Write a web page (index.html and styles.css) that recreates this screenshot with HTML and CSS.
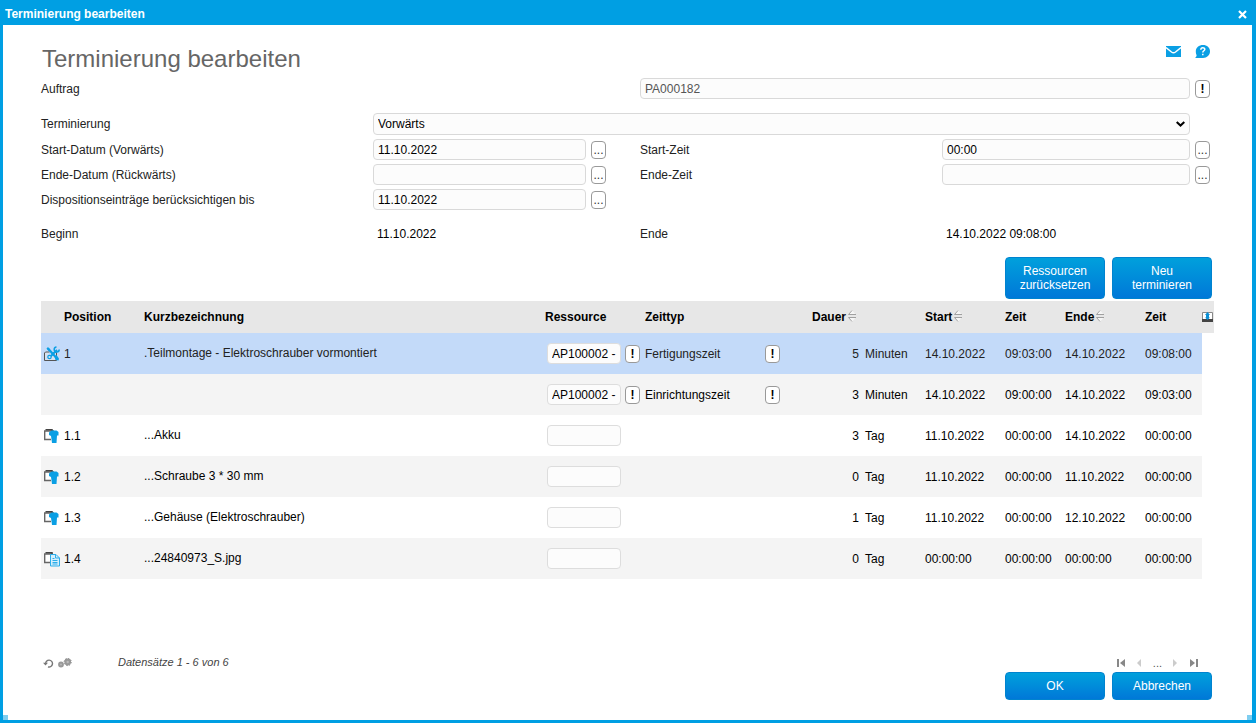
FILE: index.html
```html
<!DOCTYPE html>
<html lang="de">
<head>
<meta charset="utf-8">
<title>Terminierung bearbeiten</title>
<link rel="stylesheet" href="styles.css">
</head>
<body>
<svg class="defs" aria-hidden="true">
  <symbol id="sort" viewBox="0 0 8 12">
    <path d="M4 0 0 5h8zM0 7h8L4 12z" fill="#f6f6f6"/>
    <path d="M4 .5 .5 4.500H8M8 7.500H.5L4 11.500" fill="none" stroke="#a0a0a0"/>
  </symbol>
  <symbol id="part" viewBox="0 0 16 16">
    <path d="M0 3h2V2h6v1h3v9H0z" fill="#fff"/>
    <path d="M7 11.500H.7V3H10" fill="none" stroke="#666" stroke-width="1.400"/><path d="M1.500 1.700H8V3" fill="none" stroke="#444" stroke-width="1.500"/>
    <path d="M5 4.500 7.500 2.500h5L14.500 4v3.500H13L12.500 15H8L7 8 5 7z" fill="#0a9fe4"/>
  </symbol>
  <symbol id="doc" viewBox="0 0 16 16">
    <path d="M0 3h11v9H0z" fill="#fff"/>
    <path d="M6 11.500H.7V3H9" fill="none" stroke="#666" stroke-width="1.400"/><path d="M1.500 1.700H8V3" fill="none" stroke="#444" stroke-width="1.500"/>
    <path d="M6.500 3.500h5.500l3.500 3.500v8h-9z" fill="#d5effc" stroke="#2cadea"/>
    <path d="M11.500 3.500V7h4M8.500 7.500h2M8.500 9.500h5M8.500 11.500h5M8.500 13h5" fill="none" stroke="#2cadea"/>
  </symbol>
  <symbol id="assembly" viewBox="0 0 16 16">
    <path d="M.5 14.500h12v-8H9.500M.5 14.500V7l1-1h4" fill="#d8e2f0" stroke="#555"/>
    <path d="M4 2.500 13 12.500" stroke="#0a9fe4" stroke-width="2.200"/>
    <path d="M5.500 11.500 13 4" stroke="#0a9fe4" stroke-width="2"/>
    <path d="M15.200 3.500A2.500 2.500 0 1 1 12.500 1" fill="none" stroke="#0a9fe4" stroke-width="1.500"/>
    <path d="M2.500 2.500 4 1 6 3.500 4.500 5z" fill="#0a9fe4"/>
    <path d="M10.500 10.500l2-1.500 2.500 3.500-.5 2-3-.5z" fill="#0a9fe4"/>
    <circle cx="5.500" cy="11" r="1.700" fill="#d8e2f0" stroke="#0a9fe4" stroke-width="1.200"/>
  </symbol>
</svg>
<div class="dialog">
  <header class="titlebar">
    <span>Terminierung bearbeiten</span>
    <button class="close" type="button" aria-label="Schließen"><svg width="9" height="9" viewBox="0 0 9 9"><path d="M1 1l7 7M8 1 1 8" stroke="#fff" stroke-width="2.200"/></svg></button>
  </header>
  <main class="content">
    <div class="heading">
      <h1>Terminierung bearbeiten</h1>
      <div class="tools">
        <a href="#" aria-label="E-Mail"><svg width="15" height="11" viewBox="0 0 15 11"><path d="M0 0h15v11H0z" fill="#0a9fe4"/><path d="M0 1.500 5.500 6q2 1.500 4 0L15 1.500" fill="none" stroke="#fff" stroke-width="1.500"/></svg></a>
        <a href="#" aria-label="Hilfe"><svg width="15" height="13" viewBox="0 0 15 13"><path d="M8 0c4 0 7 2.500 7 6.300S12 13 8 13H0c1.300-1.200 1.600-2 1.600-3C1 9 .8 7.500.8 6.500.8 2.500 4 0 8 0z" fill="#0a9fe4"/><path d="M5.800 4.800c0-3 4-2.600 4-.5 0 1.500-2 1.500-2 3.200M7.800 8.700v1.500" fill="none" stroke="#fff" stroke-width="1.500"/></svg></a>
      </div>
    </div>

    <form class="form" id="form">
      <div class="row row-order">
        <label for="order">Auftrag</label>
        <div class="field from-middle"><input id="order" class="text readonly" value="PA000182" readonly><button class="mini info" type="button">!</button></div>
      </div>
      <div class="row row-mode">
        <label for="mode">Terminierung</label>
        <div class="field wide">
          <div class="select"><select id="mode"><option>Vorwärts</option></select>
          <svg class="chevron" width="9" height="6" viewBox="0 0 9 6"><path d="M.7.9 4.500 4.500 8.300.9" fill="none" stroke="#000" stroke-width="2"/></svg></div>
        </div>
      </div>
      <div class="row">
        <label for="sd">Start-Datum (Vorwärts)</label>
        <div class="field short"><input id="sd" class="text" value="11.10.2022"><button class="mini" type="button">...</button></div>
        <label for="st">Start-Zeit</label>
        <div class="field"><input id="st" class="text" value="00:00"><button class="mini" type="button">...</button></div>
      </div>
      <div class="row">
        <label for="ed">Ende-Datum (Rückwärts)</label>
        <div class="field short"><input id="ed" class="text"><button class="mini" type="button">...</button></div>
        <label for="et">Ende-Zeit</label>
        <div class="field"><input id="et" class="text"><button class="mini" type="button">...</button></div>
      </div>
      <div class="row">
        <label for="disp">Dispositionseinträge berücksichtigen bis</label>
        <div class="field short"><input id="disp" class="text" value="11.10.2022"><button class="mini" type="button">...</button></div>
      </div>
      <div class="row row-result">
        <span>Beginn</span><output class="value" name="begin">11.10.2022</output>
        <span>Ende</span><output class="value" name="end">14.10.2022 09:08:00</output>
      </div>
    </form>

    <div class="actions">
      <button class="btn tall" type="button">Ressourcen<br>zurücksetzen</button>
      <button class="btn tall" type="button">Neu<br>terminieren</button>
    </div>

    <table class="grid">
      <colgroup><col class="c-icon"><col class="c-pos"><col><col class="c-res"><col class="c-type"><col class="c-num"><col class="c-unit"><col class="c-date"><col class="c-time"><col class="c-date"><col class="c-end"><col class="c-tool"></colgroup>
      <thead>
        <tr>
          <th></th><th>Position</th><th>Kurzbezeichnung</th><th>Ressource</th><th>Zeittyp</th>
          <th class="num">Dauer<svg class="sort"><use href="#sort"/></svg></th><th></th>
          <th>Start<svg class="sort"><use href="#sort"/></svg></th><th>Zeit</th>
          <th>Ende<svg class="sort"><use href="#sort"/></svg></th><th>Zeit</th>
          <th class="tool"><button class="export" type="button" aria-label="Exportieren"><svg width="11" height="10" viewBox="0 0 11 10"><path d="M.5.500h10v9H.5z" fill="#fff" stroke="#888"/><path d="M0 7h11v3H0z" fill="#444"/><path d="M5.500 0 8 3H7v2.500h1L5.500 8 3 5.500h1V3H3z" fill="#0a8fd4"/></svg></button></th>
        </tr>
      </thead>
      <tbody>
        <tr class="selected">
          <td class="icon"><svg><use href="#assembly"/></svg></td><td class="pos">1</td><td class="name">.Teilmontage - Elektroschrauber vormontiert</td>
          <td><div class="cell"><input class="text res" aria-label="Ressource" value="AP100002 -"><button class="mini info" type="button">!</button></div></td>
          <td><div class="cell spread"><span>Fertigungszeit</span><button class="mini info" type="button">!</button></div></td>
          <td class="num">5</td><td>Minuten</td><td>14.10.2022</td><td>09:03:00</td><td>14.10.2022</td><td>09:08:00</td><td class="blank"></td>
        </tr>
        <tr class="alt">
          <td></td><td></td><td></td>
          <td><div class="cell"><input class="text res" aria-label="Ressource" value="AP100002 -"><button class="mini info" type="button">!</button></div></td>
          <td><div class="cell spread"><span>Einrichtungszeit</span><button class="mini info" type="button">!</button></div></td>
          <td class="num">3</td><td>Minuten</td><td>14.10.2022</td><td>09:00:00</td><td>14.10.2022</td><td>09:03:00</td><td class="blank"></td>
        </tr>
        <tr>
          <td class="icon"><svg><use href="#part"/></svg></td><td>1.1</td><td class="name">...Akku</td>
          <td><div class="cell"><input class="text res" aria-label="Ressource"></div></td><td></td>
          <td class="num">3</td><td>Tag</td><td>11.10.2022</td><td>00:00:00</td><td>14.10.2022</td><td>00:00:00</td><td class="blank"></td>
        </tr>
        <tr class="alt">
          <td class="icon"><svg><use href="#part"/></svg></td><td>1.2</td><td class="name">...Schraube 3 * 30 mm</td>
          <td><div class="cell"><input class="text res" aria-label="Ressource"></div></td><td></td>
          <td class="num">0</td><td>Tag</td><td>11.10.2022</td><td>00:00:00</td><td>11.10.2022</td><td>00:00:00</td><td class="blank"></td>
        </tr>
        <tr>
          <td class="icon"><svg><use href="#part"/></svg></td><td>1.3</td><td class="name">...Gehäuse (Elektroschrauber)</td>
          <td><div class="cell"><input class="text res" aria-label="Ressource"></div></td><td></td>
          <td class="num">1</td><td>Tag</td><td>11.10.2022</td><td>00:00:00</td><td>12.10.2022</td><td>00:00:00</td><td class="blank"></td>
        </tr>
        <tr class="alt">
          <td class="icon"><svg><use href="#doc"/></svg></td><td>1.4</td><td class="name">...24840973_S.jpg</td>
          <td><div class="cell"><input class="text res" aria-label="Ressource"></div></td><td></td>
          <td class="num">0</td><td>Tag</td><td>00:00:00</td><td>00:00:00</td><td>00:00:00</td><td>00:00:00</td><td class="blank"></td>
        </tr>
      </tbody>
    </table>

    <footer class="footer">
      <div class="status">
        <button class="tool-btn" type="button" aria-label="Aktualisieren"><svg width="11" height="9" viewBox="0 0 11 9"><path d="M2.700 5A3.400 3.400 0 1 1 5 7.800" fill="none" stroke="#777" stroke-width="1.400"/><path d="M0 3.700h5L2.500 6.500z" fill="#777"/></svg></button>
        <button class="tool-btn" type="button" aria-label="Einstellungen"><svg width="14" height="10" viewBox="0 0 14 10"><g fill="#bbb" stroke="#999"><circle cx="3" cy="6.500" r="1.900" stroke-width="2"/><circle cx="9.700" cy="4" r="2.300" stroke-width="2.200"/></g><circle cx="9.700" cy="4" r="3.600" fill="none" stroke="#888" stroke-dasharray="1.400 1.400"/></svg></button>
        <em class="count">Datensätze 1 - 6 von 6</em>
        <nav class="pager">
          <button type="button" aria-label="Erste"><svg width="8" height="8" viewBox="0 0 8 8"><path d="M0 0h2v8H0zM8 0v8L3 4z" fill="#888"/></svg></button>
          <button type="button" aria-label="Zurück"><svg width="8" height="8" viewBox="0 0 8 8"><path d="M6 0v8L2 4z" fill="#ccc"/></svg></button>
          <span>...</span>
          <button type="button" aria-label="Weiter"><svg width="8" height="8" viewBox="0 0 8 8"><path d="M1 0v8l4-4z" fill="#ccc"/></svg></button>
          <button type="button" aria-label="Letzte"><svg width="8" height="8" viewBox="0 0 8 8"><path d="M6 0h2v8H6zM0 0v8l5-4z" fill="#888"/></svg></button>
        </nav>
      </div>
      <div class="actions">
        <button class="btn" type="submit" form="form">OK</button>
        <button class="btn" type="button">Abbrechen</button>
      </div>
    </footer>
  </main>
  <span class="grip left"></span><span class="grip right"></span>
</div>
</body>
</html>
```

FILE: styles.css
```css
* { box-sizing: border-box; }

body {
  margin: 0;
  color: #222;
  background: #fff;
  font: 12px/14px "Liberation Sans", Arial, sans-serif;
}

button, input, select { font: inherit; color: inherit; margin: 0; }
button { border: 0; padding: 0; background: none; cursor: pointer; }
svg { display: block; }
.defs { position: absolute; width: 0; height: 0; }

.dialog {
  position: relative;
  display: flex;
  flex-direction: column;
  min-height: 100vh;
  border: 3px solid #009fe3;
  border-top: 0;
  border-right-width: 4px;
}

.titlebar {
  display: flex;
  align-items: center;
  justify-content: space-between;
  height: 25px;
  padding: 2px 5px 0 2px;
  color: #fff;
  background: #009fe3;
  font-weight: bold;
}
.close { padding-top: 2px; }

.content {
  flex: 1;
  display: flex;
  flex-direction: column;
  padding: 18px 38px 20px;
}

.heading { display: flex; justify-content: space-between; height: 35px; }
h1 { margin: 0 0 0 1px; color: #666; font-size: 24px; line-height: 32px; font-weight: normal; }
.tools { display: flex; gap: 14px; height: 17px; align-items: center; margin-right: 4px; }

.form { display: flex; flex-direction: column; gap: 4px; margin-right: 4px; }
.row {
  display: grid;
  grid-template-columns: minmax(0, 332fr) minmax(0, 267fr) minmax(0, 302fr) minmax(0, 268fr);
  align-items: center;
  min-height: 21px;
}
.row-order { margin-bottom: 10px; }
.row-result { margin-top: 5px; min-height: 30px; }
.field { display: flex; align-items: center; gap: 5px; }
.from-middle { grid-column: 3 / 5; }
.wide { grid-column: 2 / 5; padding-right: 20px; }
.short { padding-right: 34px; }
.value { padding-left: 4px; color: #000; }

.text, select {
  flex: 1;
  min-width: 0;
  height: 21px;
  padding: 0 4px;
  border: 1px solid #d9d9d9;
  border-radius: 4px;
  background: #fcfcfc;
  color: #000;
  outline: 0;
}
.readonly { color: #555; }
.select { position: relative; flex: 1; }
select { display: block; width: 100%; height: 22px; appearance: none; }
.chevron { position: absolute; right: 5px; top: 8px; pointer-events: none; }

.mini {
  flex: none;
  width: 15px;
  height: 18px;
  border: 1px solid #999;
  border-radius: 4px;
  background: #fff;
  color: #333;
  line-height: 16px;
}
.mini.info { color: #000; font-weight: bold; }

.actions { display: flex; justify-content: flex-end; gap: 7px; margin-right: 2px; }
.content > .actions { margin: 8px 2px 2px 0; }
.btn {
  width: 100px;
  height: 28px;
  border: 1px solid #0083cf;
  border-radius: 4px;
  background: linear-gradient(#00a0dc, #0078d8);
  color: #fff;
}
.tall { height: 42px; }

.grid { width: 100%; table-layout: fixed; border-collapse: collapse; color: #000; }
.c-icon { width: 23px; }
.c-pos, .c-num { width: 80px; }
.c-date { width: 80px; }
.c-res { width: 100px; }
.c-type { width: 140px; }
.c-unit, .c-time { width: 60px; }
.c-end { width: 57px; }
.c-tool { width: 12px; }
th, td { padding: 0; text-align: left; white-space: nowrap; }
th { height: 32px; background: #e7e7e7; }
td { height: 41px; background: #fff; }
.alt td { background: #f4f4f4; }
.selected td { background: #c3daf9; color: #222; }
.grid .blank { background: #fff; }
.num { text-align: right; padding-right: 6px; }
th.num { padding-right: 9px; }
.name { padding-bottom: 2px; }
.sort { display: inline-block; width: 8px; height: 12px; margin-left: 2px; vertical-align: -1px; }
.export { display: block; }
.icon svg { width: 16px; height: 16px; margin-left: 3px; }
.cell { display: flex; align-items: center; gap: 4px; padding-left: 2px; }
.res { flex: none; width: 74px; border-color: #ddd; }
.spread { justify-content: space-between; padding: 0 5px 0 0; }

.footer { margin-top: auto; padding-top: 20px; }
.status { display: flex; align-items: center; height: 18px; padding-left: 2px; }
.tool-btn { margin-right: 4px; }
.count { margin: 0 auto 2px 42px; color: #444; font-size: 11px; }
.pager { display: flex; align-items: center; gap: 10px; margin-right: 16px; color: #555; }
.pager span { font-size: 11px; }

.grip { position: absolute; bottom: 0; width: 5px; height: 5px; background: #7fceF0; }
.grip.left { left: 0; }
.grip.right { right: 0; }
```
